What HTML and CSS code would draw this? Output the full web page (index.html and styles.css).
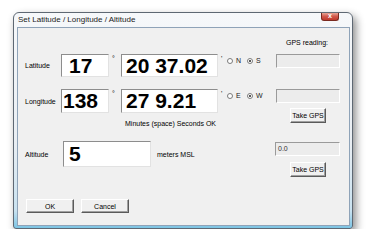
FILE: index.html
```html
<!DOCTYPE html>
<html lang="en">
<head>
    <meta charset="UTF-8">
    <title>Set Latitude / Longitude / Altitude</title>
    <link rel="stylesheet" href="styles.css">
</head>
<body>
    <div class="window">
        <div class="titlebar">
            <span class="title">Set Latitude / Longitude / Altitude</span>
            <span class="close-btn">x</span>
        </div>

        <div class="client">
            <!-- left side: entry rows -->
            <div class="left-col">
                <div class="row row-lat">
                    <span class="label">Latitude</span>
                    <div class="entry entry-deg entry-deg-lat">17</div>
                    <span class="mark">°</span>
                    <div class="entry entry-min">20 37.02</div>
                    <span class="mark mark-prime">'</span>
                    <span class="radio"></span><span class="radio-text">N</span>
                    <span class="radio checked"></span><span class="radio-text">S</span>
                </div>

                <div class="row row-lon">
                    <span class="label">Longitude</span>
                    <div class="entry entry-deg">138</div>
                    <span class="mark">°</span>
                    <div class="entry entry-min">27 9.21</div>
                    <span class="mark mark-prime">'</span>
                    <span class="radio"></span><span class="radio-text">E</span>
                    <span class="radio checked"></span><span class="radio-text">W</span>
                </div>

                <p class="hint">Minutes (space) Seconds OK</p>

                <div class="row row-alt">
                    <span class="label label-alt">Altitude</span>
                    <div class="entry entry-alt">5</div>
                    <span class="unit">meters MSL</span>
                </div>

                <div class="buttons">
                    <button class="btn btn-main">OK</button>
                    <button class="btn btn-main">Cancel</button>
                </div>
            </div>

            <!-- right side: GPS readings -->
            <div class="right-col">
                <p class="gps-title">GPS reading:</p>
                <div class="gps-box gps-lat"></div>
                <div class="gps-box gps-lon"></div>
                <button class="btn btn-gps btn-gps-pos">Take GPS</button>
                <div class="gps-box gps-alt">0.0</div>
                <button class="btn btn-gps btn-gps-alt">Take GPS</button>
            </div>
        </div>
    </div>
</body>
</html>
```

FILE: styles.css
```css
* {
    margin: 0;
    padding: 0;
    box-sizing: border-box;
}
body {
    background: #fff;
    font-family: 'Liberation Sans', Arial, sans-serif;
    font-size: 7px;
    color: #000;
}
.window {
    margin: 12px 0 0 13px;
    width: 340px;
    height: 217px;
    border: 1px solid #5e6873;
    border-radius: 6px 6px 3px 3px;
    padding: 0 2px 2px 3px;
    background: linear-gradient(to bottom, #f6f8fa 0%, #e9eef3 60%, #c9e2f0 92%, #7cc4e4 100%);
    box-shadow: 3px 4px 8px rgba(0, 0, 0, 0.45);
    display: flex;
    flex-direction: column;
}
.titlebar {
    height: 14px;
    display: flex;
    align-items: flex-start;
    justify-content: space-between;
}
.title {
    font-size: 8px;
    line-height: 14px;
    padding-left: 1px;
    color: #1a1a1a;
}
.close-btn {
    width: 18px;
    height: 8px;
    margin-right: 11px;
    border: 1px solid #7a2a20;
    border-top: none;
    border-radius: 0 0 3px 3px;
    background: linear-gradient(to bottom, #e8a394 0%, #d0574a 50%, #c0392b 100%);
    color: #fff;
    font-size: 7px;
    font-weight: bold;
    line-height: 6px;
    text-align: center;
}
.client {
    flex: 1;
    border: 1px solid #8fa3b8;
    background: #f0f0f0;
    display: flex;
}
.left-col {
    width: 258px;
    padding-left: 7px;
    padding-top: 26px;
    display: flex;
    flex-direction: column;
}
.row {
    display: flex;
    align-items: flex-start;
}
.row-lat {
    height: 23px;
}
.row-lon {
    height: 24px;
    margin-top: 12px;
}
.row-alt {
    height: 26px;
    margin-top: 13px;
    align-items: center;
}
.label {
    width: 36px;
    align-self: center;
}
.label-alt {
    width: 38px;
}
.entry {
    height: 100%;
    background: #fff;
    border: 1px solid;
    border-color: #8d8d8d #e2e2e2 #e2e2e2 #8d8d8d;
    font-size: 21px;
    font-weight: bold;
    line-height: 21px;
    white-space: nowrap;
    overflow: hidden;
}
.entry-deg {
    width: 48px;
    padding-left: 1px;
}
.entry-deg-lat {
    padding-left: 7px;
}
.entry-min {
    width: 97px;
    padding-left: 4px;
}
.entry-alt {
    width: 88px;
    padding-left: 5px;
    line-height: 24px;
}
.mark {
    width: 12px;
    padding-left: 3px;
    font-size: 7px;
    line-height: 9px;
}
.mark-prime {
    width: 9px;
    padding-left: 3px;
}
.radio {
    width: 6px;
    height: 6px;
    margin-top: 4px;
    border-radius: 50%;
    border: 1px solid #7b7b7b;
    background: #fff;
    position: relative;
}
.radio.checked::after {
    content: '';
    position: absolute;
    left: 1px;
    top: 1px;
    width: 2px;
    height: 2px;
    border-radius: 50%;
    background: #222;
}
.radio-text {
    width: 14px;
    padding-left: 3px;
    line-height: 13px;
    color: #222;
}
.hint {
    margin-top: 6px;
    padding-left: 100px;
    line-height: 9px;
}
.unit {
    margin-left: 6px;
}
.buttons {
    margin-top: 32px;
    margin-left: 1px;
    display: flex;
    gap: 7px;
}
.btn {
    font-family: 'Liberation Sans', Arial, sans-serif;
    font-size: 7px;
    color: #000;
    background: #f0f0f0;
    border: 1px solid;
    border-color: #ffffff #5a5a5a #5a5a5a #ffffff;
    box-shadow: inset -1px -1px 0 #a0a0a0;
}
.btn-main {
    width: 48px;
    height: 14px;
}
.right-col {
    width: 73px;
    display: flex;
    flex-direction: column;
}
.gps-title {
    margin-top: 10px;
    margin-left: 10px;
    line-height: 9px;
}
.gps-box {
    width: 64px;
    height: 14px;
    border: 1px solid;
    border-color: #9a9a9a #ffffff #ffffff #9a9a9a;
    background: #ececec;
    color: #333;
    padding-left: 2px;
    line-height: 12px;
}
.gps-lat {
    margin-top: 7px;
}
.gps-lon {
    margin-top: 21px;
}
.gps-alt {
    margin-top: 19px;
    margin-left: -1px;
    width: 65px;
}
.btn-gps {
    width: 36px;
    height: 15px;
    margin-left: 14px;
}
.btn-gps-pos {
    margin-top: 5px;
}
.btn-gps-alt {
    margin-top: 6px;
}
```
